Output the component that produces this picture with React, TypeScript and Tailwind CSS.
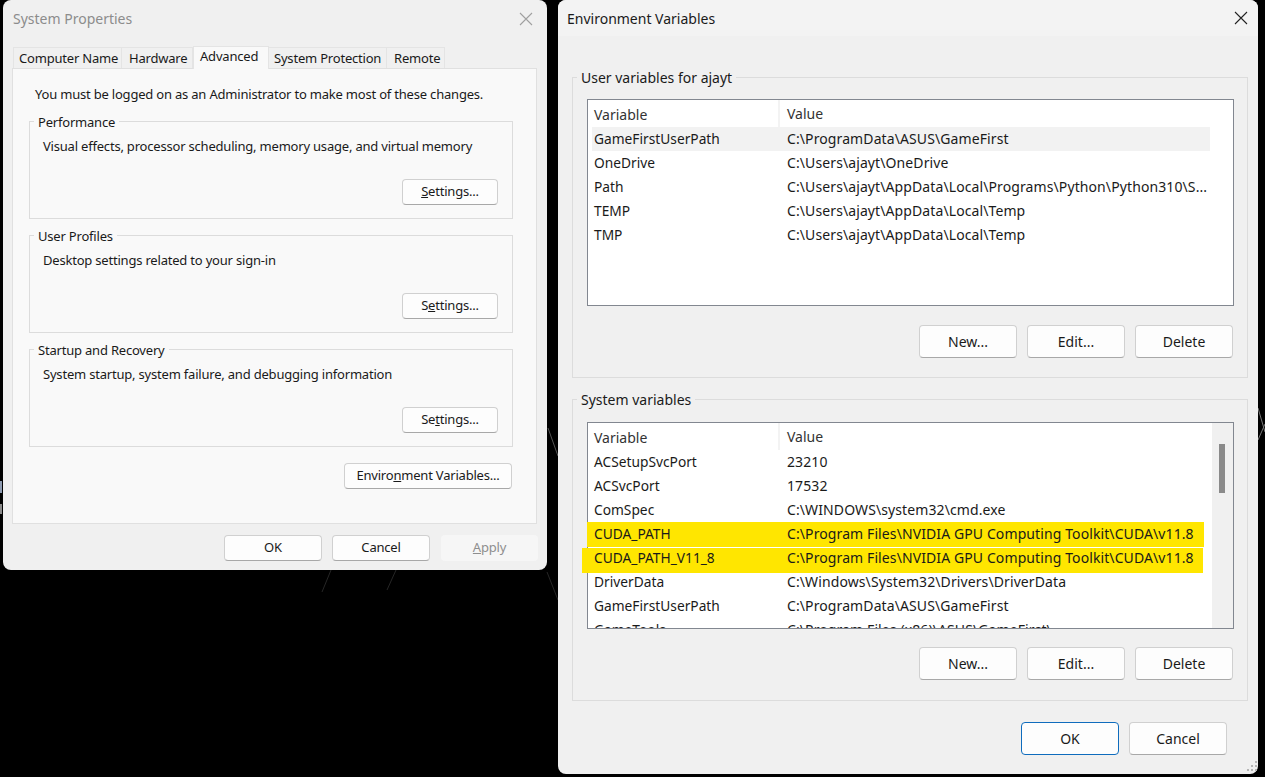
import type { ReactNode } from "react";

function Btn({ w, h, children, className = "" }: { w: string; h: string; children: ReactNode; className?: string }) {
  return (
    <button className={`${w} ${h} rounded-[4px] border border-[#d0d0d0] border-b-[#a8a8a8] bg-[#fdfdfd] text-[#1a1a1a] text-center whitespace-nowrap ${className}`}>
      {children}
    </button>
  );
}

function Close({ color, className = "" }: { color: string; className?: string }) {
  return (
    <svg width="14" height="14" viewBox="0 0 14 14" className={className}>
      <path d="M1 1 L13 13 M13 1 L1 13" stroke={color} strokeWidth="1.1" fill="none" />
    </svg>
  );
}

function PerfGroup({ title, text, btn, mt }: { title: string; text: string; btn: ReactNode; mt: string }) {
  return (
    <div className={`ml-[16px] w-[484px] h-[98px] border border-[#dcdcdc] ${mt}`}>
      <div className="-mt-[10px] ml-[4px] w-fit h-[20px] px-[4px] bg-[#f9f9f9] leading-[20px] text-[#1a1a1a]">{title}</div>
      <div className="ml-[13px] mt-[4px] h-[20px] leading-[20px] text-[#1a1a1a]">{text}</div>
      <div className="flex justify-end pr-[14px] mt-[23px]">
        <Btn w="w-[96px]" h="h-[26px]">{btn}</Btn>
      </div>
    </div>
  );
}

const userVars = [
  ["GameFirstUserPath", "C:\\ProgramData\\ASUS\\GameFirst"],
  ["OneDrive", "C:\\Users\\ajayt\\OneDrive"],
  ["Path", "C:\\Users\\ajayt\\AppData\\Local\\Programs\\Python\\Python310\\S..."],
  ["TEMP", "C:\\Users\\ajayt\\AppData\\Local\\Temp"],
  ["TMP", "C:\\Users\\ajayt\\AppData\\Local\\Temp"],
];

const systemVars = [
  ["ACSetupSvcPort", "23210"],
  ["ACSvcPort", "17532"],
  ["ComSpec", "C:\\WINDOWS\\system32\\cmd.exe"],
  ["CUDA_PATH", "C:\\Program Files\\NVIDIA GPU Computing Toolkit\\CUDA\\v11.8"],
  ["CUDA_PATH_V11_8", "C:\\Program Files\\NVIDIA GPU Computing Toolkit\\CUDA\\v11.8"],
  ["DriverData", "C:\\Windows\\System32\\Drivers\\DriverData"],
  ["GameFirstUserPath", "C:\\ProgramData\\ASUS\\GameFirst"],
  ["GameTools", "C:\\Program Files (x86)\\ASUS\\GameFirst\\"],
];

function Rows({ rows, selected }: { rows: string[][]; selected?: boolean }) {
  return (
    <div className="relative z-10 w-[622px] shrink-0 pl-[4px]">
      <div className="flex h-[27px] items-center text-[#333]">
        <div className="w-[188px] pl-[2px] h-full leading-[30px] border-r-2 border-[#f3f3f3]">Variable</div>
        <div className="flex-1 pl-[7px] leading-[30px]">Value</div>
      </div>
      {rows.map(([name, value], i) => (
        <div key={name} className={`flex h-[24px] items-baseline leading-[24px] text-[#1a1a1a] whitespace-nowrap ${selected && i === 0 ? "bg-[#f2f2f2]" : ""}`}>
          <div className="w-[195px] pl-[2px] text-[13.75px]">{name}</div>
          <div className="tracking-[0.1px]">{value}</div>
        </div>
      ))}
    </div>
  );
}

function VarButtons({ mt }: { mt: string }) {
  return (
    <div className={`flex justify-end gap-[10px] pr-[14px] ${mt}`}>
      <Btn w="w-[98px]" h="h-[33px]">New...</Btn>
      <Btn w="w-[98px]" h="h-[33px]">Edit...</Btn>
      <Btn w="w-[98px]" h="h-[33px]">Delete</Btn>
    </div>
  );
}

export default function App() {
  return (
    <div className="relative w-[1265px] h-[777px] overflow-hidden bg-black font-['Noto_Sans','Open_Sans',sans-serif]">
      {/* wallpaper streaks showing between the windows */}
      <svg width="1265" height="777" className="absolute inset-0">
        <path d="M548 428 L558 456" stroke="#555" strokeWidth="1" fill="none" />
        <path d="M331 570 L322 592 M396 570 L387 590 M547 572 L558 600" stroke="#262626" strokeWidth="1" fill="none" />
        <path d="M1258 408 L1265 432 M1258 440 L1265 424" stroke="#777" strokeWidth="1" fill="none" />
        <rect x="0" y="481" width="2" height="12" fill="#8d9ab0" />
        <rect x="0" y="504" width="2" height="10" fill="#8a8a8a" />
      </svg>

      <div className="relative flex gap-[11px] pl-[3px] items-start">
        {/* System Properties */}
        <div className="w-[544px] h-[570px] rounded-[8px] bg-[#f0f0f0] shrink-0 text-[13px] tracking-[-0.2px]">
          <div className="flex h-[46px] items-start justify-between pl-[10px] pr-[14px]">
            <span className="mt-[9px] text-[14px] tracking-normal leading-[20px] text-[#8c8c8c]">System Properties</span>
            <Close color="#a0a0a0" className="mt-[12px]" />
          </div>
          <div className="flex items-end h-[23px] ml-[10px] relative z-10 text-[#1a1a1a] whitespace-nowrap">
            <div className="w-[109px] h-[21px] mb-[1px] pl-[5px] leading-[21px] border border-b-0 border-[#e4e4e4] bg-[#f0f0f0]">Computer Name</div>
            <div className="w-[71px] h-[21px] mb-[1px] pl-[7px] leading-[21px] border-t border-r border-[#e4e4e4] bg-[#f0f0f0]">Hardware</div>
            <div className="w-[76px] h-[23px] pl-[6px] leading-[18px] border border-b-0 border-[#e4e4e4] bg-[#f9f9f9]">Advanced</div>
            <div className="w-[118px] h-[21px] mb-[1px] pl-[5px] leading-[21px] border-t border-r border-[#e4e4e4] bg-[#f0f0f0]">System Protection</div>
            <div className="w-[58px] h-[21px] mb-[1px] pl-[7px] leading-[21px] border-t border-r border-[#e4e4e4] bg-[#f0f0f0]">Remote</div>
          </div>
          <div className="ml-[9px] -mt-[1px] w-[525px] h-[456px] border border-[#e0e0e0] bg-[#f9f9f9]">
            <div className="ml-[22px] mt-[15px] h-[20px] leading-[20px] text-[#1a1a1a] whitespace-nowrap">You must be logged on as an Administrator to make most of these changes.</div>
            <PerfGroup mt="mt-[17px]" title="Performance" text="Visual effects, processor scheduling, memory usage, and virtual memory" btn={<><u>S</u>ettings...</>} />
            <PerfGroup mt="mt-[16px]" title="User Profiles" text="Desktop settings related to your sign-in" btn={<>S<u>e</u>ttings...</>} />
            <PerfGroup mt="mt-[16px]" title="Startup and Recovery" text="System startup, system failure, and debugging information" btn={<>Se<u>t</u>tings...</>} />
            <div className="flex justify-end pr-[24px] mt-[16px]">
              <Btn w="w-[168px]" h="h-[26px]">Enviro<u>n</u>ment Variables...</Btn>
            </div>
          </div>
          <div className="flex justify-end gap-[10px] mt-[11px] pr-[9px]">
            <Btn w="w-[98px]" h="h-[26px]">OK</Btn>
            <Btn w="w-[98px]" h="h-[26px]">Cancel</Btn>
            <button className="w-[97px] h-[26px] ml-[1px] rounded-[4px] bg-[#f6f6f6] text-[#8e8e8e]"><u>A</u>pply</button>
          </div>
        </div>

        {/* Environment Variables */}
        <div className="relative w-[700px] h-[774px] rounded-[8px] bg-[#f0f0f0] shrink-0 text-[14px]">
          <div className="flex h-[36px] items-center justify-between pl-[9px] pr-[10px] bg-[#f3f3f3] rounded-t-[8px]">
            <span className="text-[#1a1a1a]">Environment Variables</span>
            <Close color="#222222" />
          </div>

          <div className="ml-[14px] mt-[41px] w-[676px] h-[301px] border border-[#dcdcdc]">
            <div className="-mt-[10px] ml-[4px] w-fit h-[20px] px-[4px] bg-[#f0f0f0] leading-[20px] text-[#1a1a1a]">User variables for ajayt</div>
            <div className="ml-[14px] mt-[11px] w-[647px] h-[207px] border border-[#828790] bg-white overflow-hidden">
              <Rows rows={userVars} selected />
            </div>
            <VarButtons mt="mt-[19px]" />
          </div>

          <div className="ml-[14px] mt-[21px] w-[676px] h-[302px] border border-[#dcdcdc]">
            <div className="-mt-[10px] ml-[4px] w-fit h-[20px] px-[4px] bg-[#f0f0f0] leading-[20px] text-[#1a1a1a]">System variables</div>
            <div className="relative ml-[14px] mt-[12px] w-[647px] h-[207px] border border-[#828790] bg-white">
              {/* yellow marker strokes laid over the list */}
              <div className="absolute left-[-1px] top-[99px] w-[617px] h-[25px] bg-[#ffe600]" />
              <div className="absolute left-[-6px] top-[125px] w-[621px] h-[25px] bg-[#ffe600]" />
              <div className="flex h-full overflow-hidden">
                <Rows rows={systemVars} />
                <div className="ml-[2px] flex-1 bg-[#f0f0f0]">
                  <div className="ml-[7px] mt-[21px] w-[6px] h-[49px] bg-[#8a8a8a]" />
                </div>
              </div>
            </div>
            <VarButtons mt="mt-[18px]" />
          </div>

          <div className="flex justify-end gap-[10px] mt-[21px] pr-[31px]">
            <Btn w="w-[98px]" h="h-[33px]" className="!border-[#0f6cbd]">OK</Btn>
            <Btn w="w-[98px]" h="h-[33px]">Cancel</Btn>
          </div>

          {/* resize grip */}
          <svg width="12" height="12" viewBox="0 0 12 12" className="absolute right-[0px] bottom-[1px]" fill="#b5b5b5">
            <rect x="9" y="0" width="2" height="2" />
            <rect x="5" y="4" width="2" height="2" />
            <rect x="9" y="4" width="2" height="2" />
            <rect x="1" y="8" width="2" height="2" />
            <rect x="5" y="8" width="2" height="2" />
            <rect x="9" y="8" width="2" height="2" />
          </svg>
        </div>
      </div>
    </div>
  );
}
